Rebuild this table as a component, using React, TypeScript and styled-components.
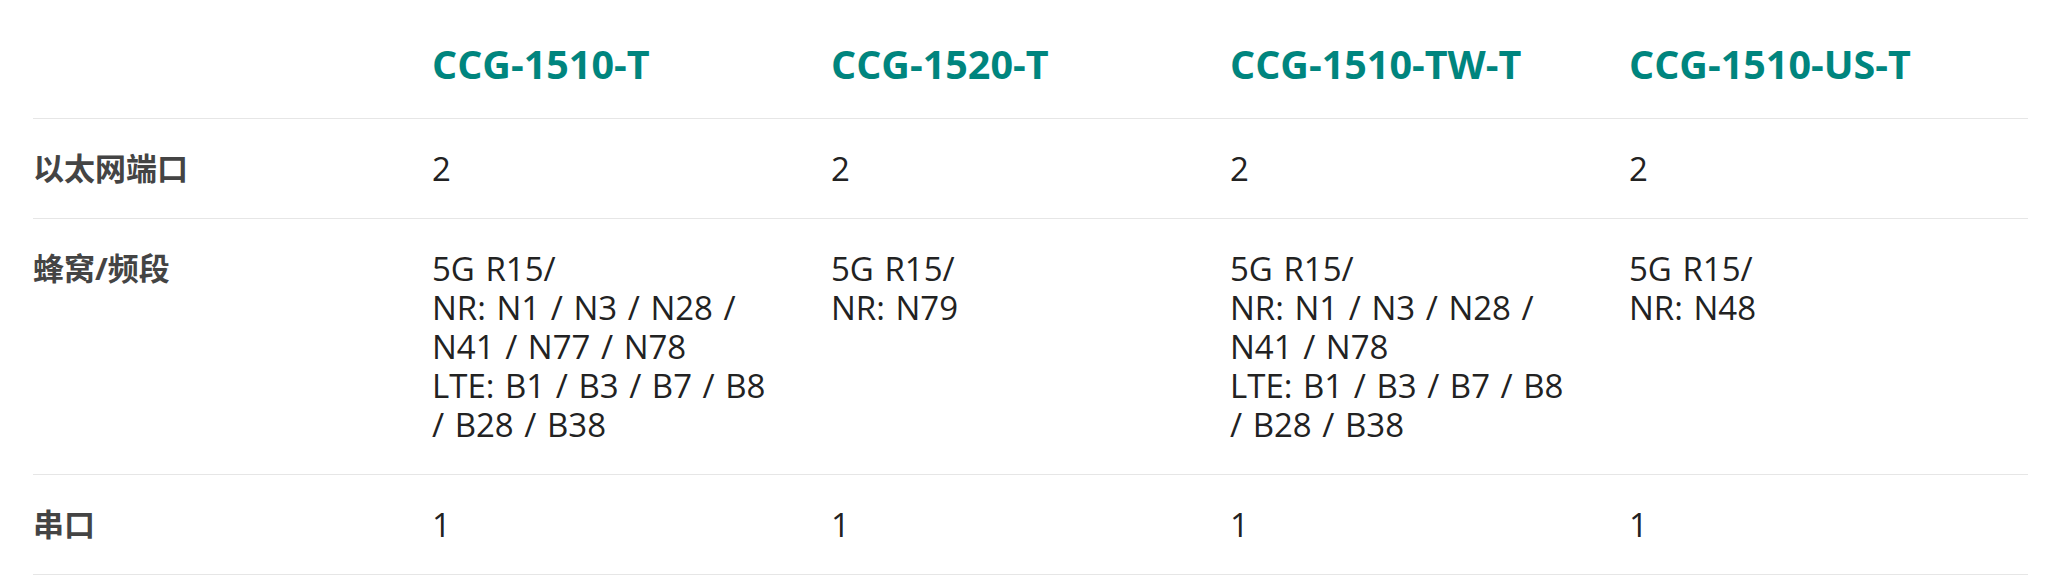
import React from 'react';
import styled, { createGlobalStyle } from 'styled-components';

const GlobalStyle = createGlobalStyle`
  html, body {
    margin: 0;
    padding: 0;
    background: #ffffff;
  }
  body {
    font-family: 'Open Sans', 'Noto Sans CJK SC', sans-serif;
  }
`;

const Page = styled.div`
  padding: 0 32px 0 33px;
`;

const Table = styled.table`
  width: 100%;
  border-collapse: collapse;
  table-layout: fixed;
`;

const Row = styled.tr`
  border-bottom: 1px solid #e6e6e6;
`;

const HeadCell = styled.th`
  padding: 40px 20px 30px 0;
  text-align: left;
  vertical-align: top;
  font-size: 39.5px;
  line-height: 48px;
  font-weight: 700;
  color: #00857e;
  white-space: nowrap;
`;

const Cell = styled.td<{ $label?: boolean }>`
  padding: 30px 20px 30px 0;
  text-align: left;
  vertical-align: top;
  font-size: ${(p) => (p.$label ? '31px' : '33px')};
  line-height: 39px;
  word-spacing: ${(p) => (p.$label ? '0' : '2px')};
  font-weight: ${(p) => (p.$label ? 700 : 400)};
  color: ${(p) => (p.$label ? '#444444' : '#222222')};
  white-space: nowrap;
`;

const models = ['CCG-1510-T', 'CCG-1520-T', 'CCG-1510-TW-T', 'CCG-1510-US-T'];

const rows: { label: string; values: string[][] }[] = [
  { label: '以太网端口', values: [['2'], ['2'], ['2'], ['2']] },
  {
    label: '蜂窝/频段',
    values: [
      ['5G R15/', 'NR: N1 / N3 / N28 /', 'N41 / N77 / N78', 'LTE: B1 / B3 / B7 / B8', '/ B28 / B38'],
      ['5G R15/', 'NR: N79'],
      ['5G R15/', 'NR: N1 / N3 / N28 /', 'N41 / N78', 'LTE: B1 / B3 / B7 / B8', '/ B28 / B38'],
      ['5G R15/', 'NR: N48'],
    ],
  },
  { label: '串口', values: [['1'], ['1'], ['1'], ['1']] },
];

export default function App() {
  return (
    <Page>
      <GlobalStyle />
      <Table>
        <thead>
          <Row>
            <HeadCell />
            {models.map((m) => (
              <HeadCell key={m}>{m}</HeadCell>
            ))}
          </Row>
        </thead>
        <tbody>
          {rows.map((r) => (
            <Row key={r.label}>
              <Cell $label>{r.label}</Cell>
              {r.values.map((lines, i) => (
                <Cell key={i}>
                  {lines.map((l, j) => (
                    <React.Fragment key={j}>
                      {j > 0 && <br />}
                      {l}
                    </React.Fragment>
                  ))}
                </Cell>
              ))}
            </Row>
          ))}
        </tbody>
      </Table>
    </Page>
  );
}
